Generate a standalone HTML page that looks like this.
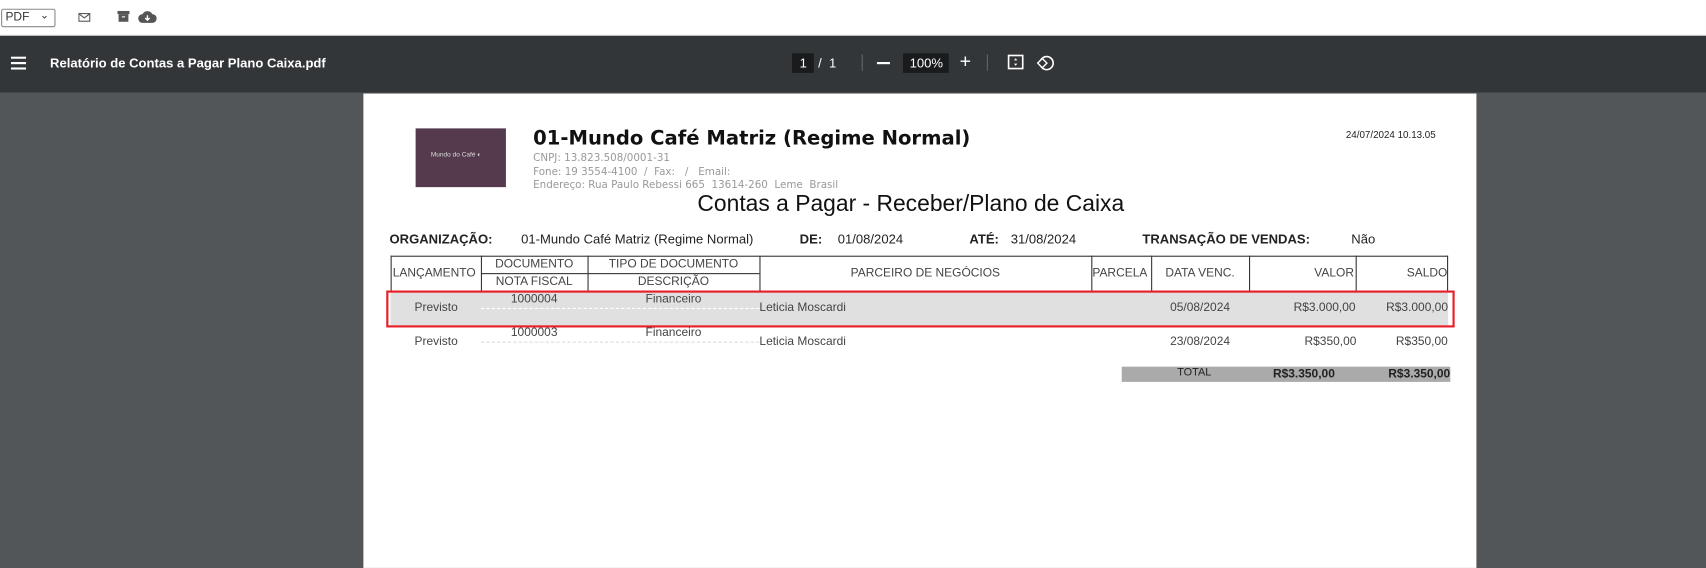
<!DOCTYPE html>
<html><head><meta charset="utf-8"><style>
*{margin:0;padding:0;box-sizing:border-box}
body{width:1706px;height:522px;overflow:hidden;background:#525659;font-family:"Liberation Sans",sans-serif;position:relative}
#w{position:absolute;left:0;top:0;width:1568px;height:480px;transform:scale(1.088);transform-origin:0 0}
.a{position:absolute;white-space:nowrap}
.top{left:0;top:0;width:1568px;height:33px;background:#fff;border-bottom:1px solid #ccc}
.tb{left:0;top:33px;width:1568px;height:52px;background:#323639}
.page{left:334px;top:86px;width:1023px;height:436px;background:#fff}
.h{font-size:11px;color:#222}
.r{color:#444}
.b{font-weight:bold}
.g{color:#999;font-family:"DejaVu Sans",sans-serif;font-size:9.5px}
.line{position:absolute;background:#333}
.c{text-align:center}
</style></head><body><div id="w">
<div class="a top"></div>
<div class="a" style="left:1px;top:8px;width:50px;height:17px;border:1px solid #888;border-radius:2px;font-size:11px;color:#333;padding:1px 0 0 3px">PDF <span style="position:absolute;right:5px;top:0px;font-size:10px">⌄</span></div>
<svg class="a" style="left:72px;top:12px" width="12" height="9"><rect x="0.5" y="0.5" width="10" height="7" fill="none" stroke="#555"/><path d="M1 1 L5.5 4.5 L10 1" fill="none" stroke="#555"/></svg>
<svg class="a" style="left:108px;top:10px" width="12" height="11"><rect x="0" y="0" width="11" height="3" fill="#555"/><rect x="1" y="3" width="9" height="7" fill="#555"/><rect x="4" y="5" width="3" height="1" fill="#fff"/></svg>
<svg class="a" style="left:127px;top:8px" width="17" height="14"><path d="M4 13 A4 4 0 0 1 4 5 A5 5 0 0 1 13 5 A4 4 0 0 1 13 13 Z" fill="#555"/><path d="M8.5 6 V10 M6.5 8.5 L8.5 10.5 L10.5 8.5" stroke="#fff" stroke-width="1.3" fill="none"/></svg>
<div class="a tb"></div>
<svg class="a" style="left:10px;top:52px" width="14" height="12"><rect y="0" width="14" height="2" fill="#fff"/><rect y="5" width="14" height="2" fill="#fff"/><rect y="10" width="14" height="2" fill="#fff"/></svg>
<div class="a" style="left:46px;top:51px;color:#fff;font-size:12px;font-weight:bold">Relatório de Contas a Pagar Plano Caixa.pdf</div>
<div class="a" style="left:728px;top:49px;width:20px;height:18px;background:#191b1c"></div>
<div class="a" style="left:735px;top:51px;color:#fff;font-size:12px">1</div>
<div class="a" style="left:752px;top:51px;color:#fff;font-size:12px">/ &nbsp;1</div>
<div class="a" style="left:792px;top:50px;width:1px;height:15px;background:#666"></div>
<div class="a" style="left:806px;top:57px;width:12px;height:2px;background:#fff"></div>
<div class="a" style="left:830px;top:49px;width:42px;height:18px;background:#191b1c"></div>
<div class="a" style="left:836px;top:51px;color:#fff;font-size:12px">100%</div>
<div class="a" style="left:882px;top:46px;color:#fff;font-size:18px">+</div>
<div class="a" style="left:907px;top:50px;width:1px;height:15px;background:#666"></div>
<svg class="a" style="left:926px;top:50px" width="16" height="15"><rect x="1" y="1" width="13" height="12" fill="none" stroke="#fff" stroke-width="1.5"/><path d="M7.5 3.5 L6 5.5 H9 Z M7.5 10.5 L6 8.5 H9 Z" fill="#fff"/></svg>
<svg class="a" style="left:953px;top:49px" width="17" height="17"><circle cx="9" cy="9" r="6" fill="none" stroke="#fff" stroke-width="1.5"/><rect x="2" y="6" width="6" height="6" transform="rotate(45 5 9)" fill="#323639" stroke="#fff" stroke-width="1.3"/></svg>
<div class="a page"></div>
<div class="a" style="left:382px;top:118px;width:83px;height:54px;background:#553a4d"></div>
<div class="a" style="left:396px;top:140px;color:#ddd;font-size:6px">Mundo do Café ◐</div>
<div class="a b" style="left:490px;top:117px;font-size:18px;font-family:'DejaVu Sans',sans-serif;color:#111">01-Mundo Café Matriz (Regime Normal)</div>
<div class="a g" style="left:490px;top:140px">CNPJ: 13.823.508/0001-31</div>
<div class="a g" style="left:490px;top:153px">Fone: 19 3554-4100 &nbsp;/ &nbsp;Fax: &nbsp;&nbsp;/ &nbsp;&nbsp;Email:</div>
<div class="a g" style="left:490px;top:165px">Endereço: Rua Paulo Rebessi 665 &nbsp;13614-260 &nbsp;Leme &nbsp;Brasil</div>
<div class="a" style="left:1237px;top:119px;font-size:9px;color:#222">24/07/2024 10.13.05</div>
<div class="a" style="left:641px;top:176px;font-size:21px;color:#111">Contas a Pagar - Receber/Plano de Caixa</div>
<div class="a h b" style="left:358px;top:213px;font-size:12px">ORGANIZAÇÃO:</div>
<div class="a h" style="left:479px;top:213px;font-size:12px">01-Mundo Café Matriz (Regime Normal)</div>
<div class="a h b" style="left:735px;top:213px;font-size:12px">DE:</div>
<div class="a h" style="left:770px;top:213px;font-size:12px">01/08/2024</div>
<div class="a h b" style="left:891px;top:213px;font-size:12px">ATÉ:</div>
<div class="a h" style="left:929px;top:213px;font-size:12px">31/08/2024</div>
<div class="a h b" style="left:1050px;top:213px;font-size:12px">TRANSAÇÃO DE VENDAS:</div>
<div class="a h" style="left:1242px;top:213px;font-size:12px">Não</div>
<div class="line" style="left:359px;top:235px;width:972px;height:1px"></div>
<div class="line" style="left:442px;top:251px;width:256px;height:1px"></div>
<div class="line" style="left:359px;top:235px;width:1px;height:33px"></div>
<div class="line" style="left:442px;top:235px;width:1px;height:33px"></div>
<div class="line" style="left:540px;top:235px;width:1px;height:33px"></div>
<div class="line" style="left:698px;top:235px;width:1px;height:33px"></div>
<div class="line" style="left:1003px;top:235px;width:1px;height:33px"></div>
<div class="line" style="left:1058px;top:235px;width:1px;height:33px"></div>
<div class="line" style="left:1148px;top:235px;width:1px;height:33px"></div>
<div class="line" style="left:1246px;top:235px;width:1px;height:33px"></div>
<div class="line" style="left:1330px;top:235px;width:1px;height:33px"></div>
<div class="a h r" style="left:361px;top:245px">LANÇAMENTO</div>
<div class="a h r c" style="left:442px;top:237px;width:98px">DOCUMENTO</div>
<div class="a h r c" style="left:540px;top:237px;width:158px">TIPO DE DOCUMENTO</div>
<div class="a h r c" style="left:442px;top:253px;width:98px">NOTA FISCAL</div>
<div class="a h r c" style="left:540px;top:253px;width:158px">DESCRIÇÃO</div>
<div class="a h r c" style="left:698px;top:245px;width:305px">PARCEIRO DE NEGÓCIOS</div>
<div class="a h r" style="left:1004px;top:245px">PARCELA</div>
<div class="a h r c" style="left:1058px;top:245px;width:90px">DATA VENC.</div>
<div class="a h r" style="left:1208px;top:245px">VALOR</div>
<div class="a h r" style="left:1293px;top:245px">SALDO</div>
<div class="a" style="left:359px;top:268px;width:972px;height:31px;background:#e0e0e0"></div>
<div class="a" style="left:355px;top:267px;width:982px;height:34px;border:2px solid #e8202a"></div>
<div class="a h r" style="left:381px;top:277px">Previsto</div>
<div class="a h r c" style="left:442px;top:269px;width:98px">1000004</div>
<div class="a h r c" style="left:540px;top:269px;width:158px">Financeiro</div>
<div class="a" style="left:442px;top:283px;width:256px;border-top:1px dashed #fff"></div>
<div class="a h r" style="left:698px;top:277px">Leticia Moscardi</div>
<div class="a h r c" style="left:1058px;top:277px;width:90px">05/08/2024</div>
<div class="a h r" style="left:1189px;top:277px">R$3.000,00</div>
<div class="a h r" style="left:1274px;top:277px">R$3.000,00</div>
<div class="a h r" style="left:381px;top:308px">Previsto</div>
<div class="a h r c" style="left:442px;top:300px;width:98px">1000003</div>
<div class="a h r c" style="left:540px;top:300px;width:158px">Financeiro</div>
<div class="a" style="left:442px;top:314px;width:256px;border-top:1px dashed #ddd"></div>
<div class="a h r" style="left:698px;top:308px">Leticia Moscardi</div>
<div class="a h r c" style="left:1058px;top:308px;width:90px">23/08/2024</div>
<div class="a h r" style="left:1199px;top:308px">R$350,00</div>
<div class="a h r" style="left:1283px;top:308px">R$350,00</div>
<div class="a" style="left:1031px;top:337px;width:302px;height:14px;background:#aaa"></div>
<div class="a h" style="left:1082px;top:337px;font-size:10px">TOTAL</div>
<div class="a h b" style="left:1170px;top:338px;font-size:11px">R$3.350,00</div>
<div class="a h b" style="left:1276px;top:338px;font-size:11px">R$3.350,00</div>
</div></body></html>
